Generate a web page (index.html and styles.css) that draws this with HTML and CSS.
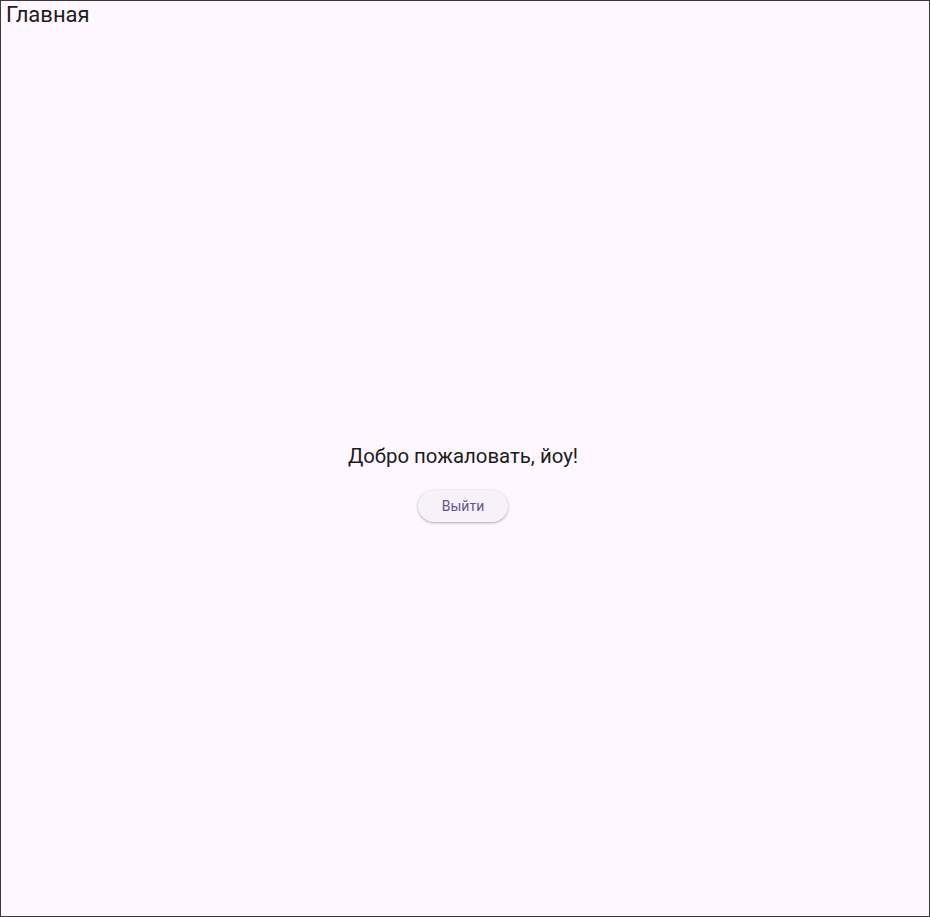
FILE: index.html
```html
<!DOCTYPE html>
<html lang="ru">
<head>
<meta charset="utf-8">
<title>Главная</title>
<link rel="stylesheet" href="styles.css">
</head>
<body>
<div class="frame">
  <header class="appbar">Главная</header>
  <main class="content">
    <div class="stack">
      <p class="welcome">Добро пожаловать, йоу!</p>
      <button class="btn" type="button">Выйти</button>
    </div>
  </main>
</div>
</body>
</html>
```

FILE: styles.css
```css
html, body {
  margin: 0;
  padding: 0;
  background: #fef7ff;
}
.frame {
  box-sizing: border-box;
  width: 930px;
  height: 917px;
  border: 1px solid #3a3a3a;
  background: #fef7ff;
  display: flex;
  flex-direction: column;
  font-family: Roboto, "Liberation Sans", sans-serif;
  color: #1d1b20;
}
.appbar {
  height: 55px;
  flex: none;
  box-sizing: border-box;
  padding: 0 0 0 5px;
  font-size: 22px;
  line-height: 28px;
  font-weight: 400;
}
.content {
  flex: 1;
  display: flex;
  align-items: center;
  justify-content: center;
  padding: 2px 4px 0 0;
}
.stack {
  display: flex;
  flex-direction: column;
  align-items: center;
}
.welcome {
  margin: 0;
  font-size: 20.4px;
  line-height: 24px;
}
.btn {
  margin: 22px 0 8px;
  height: 32px;
  padding: 0 24px;
  border: none;
  border-radius: 16px;
  background: #f7f2fa;
  color: #65558f;
  font-family: Roboto, "Liberation Sans", sans-serif;
  font-size: 14px;
  font-weight: 400;
  box-shadow: 0 1px 2px rgba(0,0,0,0.22), 0 1px 3px 1px rgba(0,0,0,0.08);
}
```
